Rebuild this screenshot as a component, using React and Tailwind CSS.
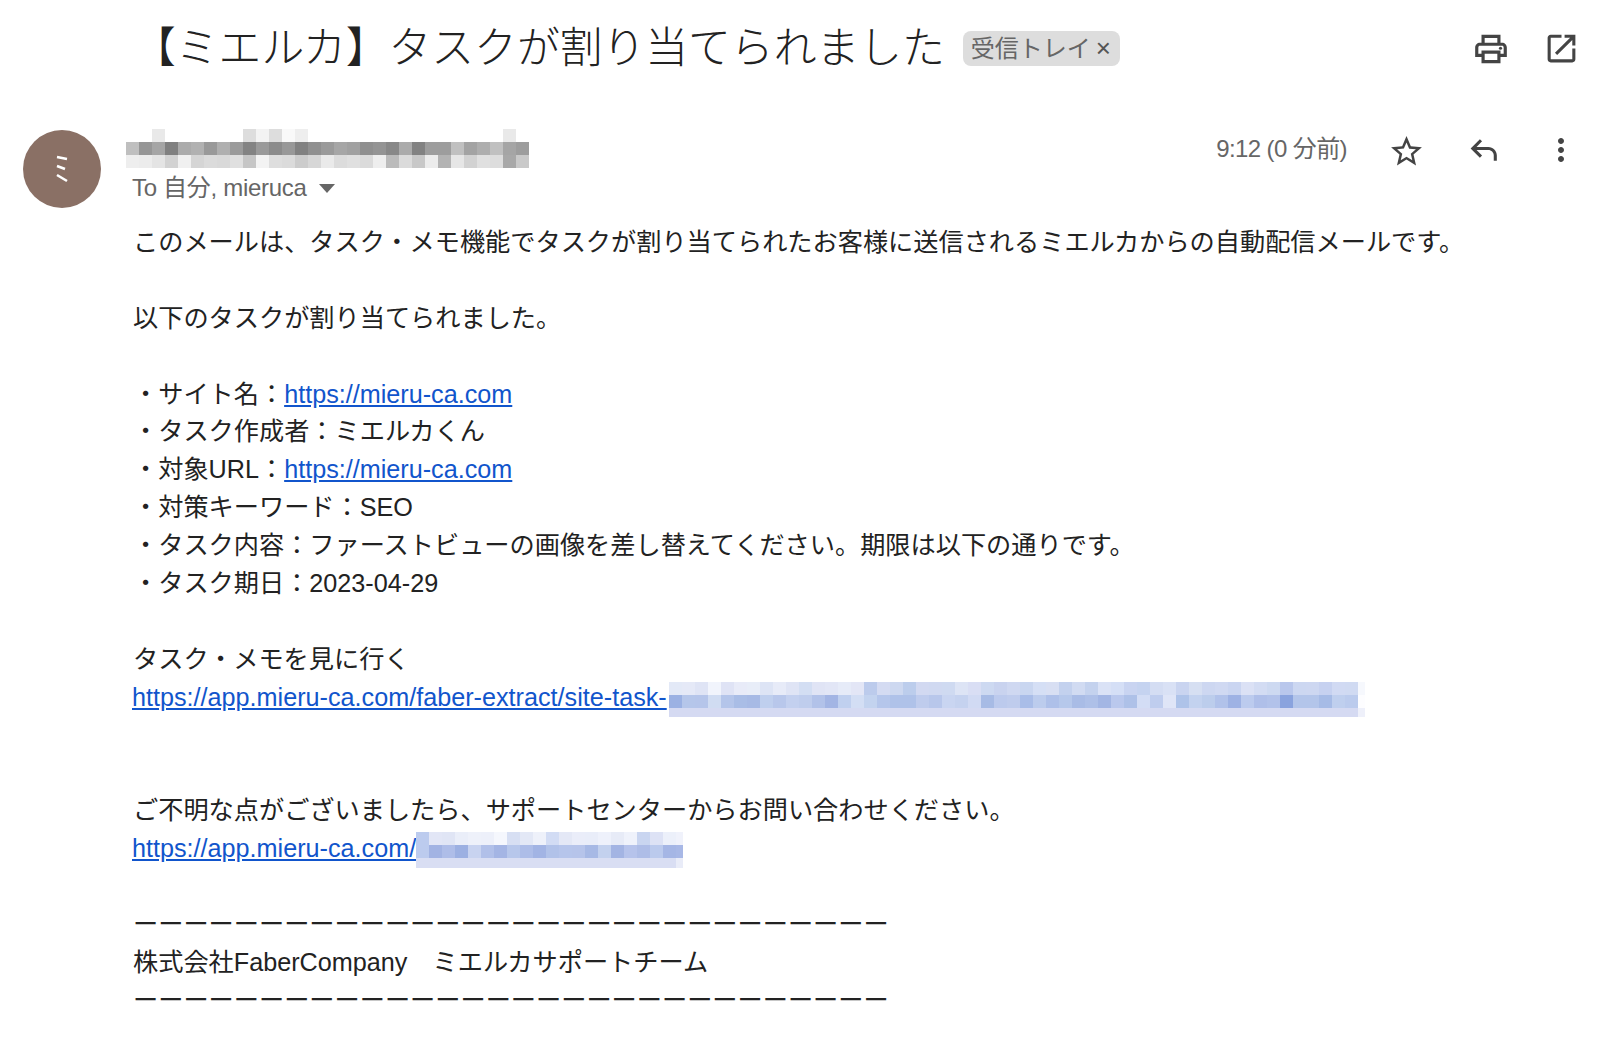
import React from 'react';

const NAME_ROWS = [
  ['fff', 'fff', 'e9e9e9', 'fff', 'fff', 'fff', 'fff', 'fff', 'fff', 'ddd', 'f3f3f3', 'ddd', 'f9f9f9', 'eee', 'fff', 'fff', 'fff', 'fff', 'fff', 'fff', 'fff', 'fff', 'fff', 'fff', 'fff', 'fff', 'fff', 'fff', 'fff', 'e9e9e9', 'fff'],
  ['bfbfbf', '969696', 'a5a5a5', '808080', 'ababab', 'b1b1b1', '999999', 'afafaf', '9b9b9b', '838383', '9a9a9a', '8b8b8b', '989898', '818181', '909090', '9a9a9a', 'a6a6a6', 'a1a1a1', '8f8f8f', '949494', '888888', 'ababab', '828282', '9d9d9d', '9d9d9d', 'c0c0c0', 'a3a3a3', 'aeaeae', 'c0c0c0', 'a5a5a5', '9d9d9d'],
  ['eeeeee', 'ececec', 'e4e4e4', 'd2d2d2', 'f0f0f0', 'd5d5d5', 'dbdbdb', 'd9d9d9', 'e0e0e0', 'c6c6c6', 'f3f3f3', 'dedede', 'dbdbdb', 'cccccc', 'd7d7d7', 'eaeaea', 'dcdcdc', 'e0e0e0', 'dbdbdb', 'eeeeee', 'bbbbbb', 'dbdbdb', 'c8c8c8', 'ececec', 'b3b3b3', 'e6e6e6', 'd2d2d2', 'e0e0e0', 'dddddd', 'a8a8a8', 'c9c9c9'],
];

const TASK_URL_ROWS = [
  ['e3e9f7', 'e5e9f7', 'dfe4f5', 'f1f4fc', 'dfe3f5', 'e8ebf8', 'e8edf8', 'dde4f5', 'e7ebf8', 'dfe4f5', 'd3def3', 'e0e4f5', 'e2e6f6', 'e6ebf8', 'e3e6f6', 'bccbec', 'd4dbf2', 'cdd8f0', 'bccdec', 'd2d9f1', 'd0d9f1', 'cfdaf1', 'dde4f5', 'd9def4', 'cdd9f1', 'c9d3ef', 'cfd8f1', 'c9d6f0', 'd5dff5', 'd8dff3', 'c3d1ee', 'd1dbf2', 'c4d2ee', 'dae2f6', 'd5dff6', 'c9d4f1', 'c5d3f0', 'd4ddf3', 'd9e1f5', 'c9d4f0', 'd6dff2', 'cdd7f1', 'd0d9f2', 'cad5f1', 'dbe1f5', 'd3dcf3', 'cdd9f1', 'b9c7ec', 'ccd7f1', 'cdd7f1', 'c6d1f0', 'd1daf3', 'd0daf2'],
  ['9bb1e3', 'b5c6ea', 'b5c5ea', 'd0dcf2', 'b4c5ea', 'a9bde6', 'a7bae5', 'bfcfee', 'b8c7eb', 'c3d0ef', 'bfcded', 'b2c2e9', 'a3b5e4', 'c0d0ef', 'd3def4', 'c3d3ef', 'b5c6eb', 'afc2e9', 'afc2e9', 'bfcced', 'b8c7eb', 'c9d5f1', 'c5d2ef', 'd1daf3', 'a7bbe5', 'bccaed', 'bfcced', 'a9bde8', 'bccced', 'aec0e9', 'b6c8eb', 'a9bce6', 'aec0e8', 'a3b6e4', 'bac8ed', 'aec1e8', 'd3ddf5', 'bfcdee', 'dfe5f7', 'aec3e9', 'c3d2ef', 'bccdec', 'b1c2ea', '9eb2e4', 'bccbee', 'afbfe9', 'b2c2ea', '8aa3de', 'b3c5ea', 'b3c5ea', 'a6bbe6', 'bfcfee', 'bbcbed'],
];

const SUPPORT_URL_ROWS = [
  ['bccbee', 'e2e6f6', 'e0e5f5', 'eaeef9', 'eef1fa', 'edf0fa', 'f5f7fd', 'd7dff3', 'e3e8f6', 'eef1fa', 'd2dcf4', 'e4e8f6', 'eaedf9', 'e9edf9', 'eef1fb', 'e7ebf7', 'eff2fb', 'c9d5f0', 'dde2f5', 'ecf0fa'],
  ['bccbee', 'a2b3e3', 'aebde8', '9cb0e2', 'c8d3f0', 'b1c0e9', 'a4b5e4', 'b7c7eb', 'adbde8', 'a2b4e4', 'b1c2e9', 'b6c5eb', 'b6c4ea', 'a7b9e5', 'c3d1ee', 'a3b4e3', 'b6c3eb', 'aebde7', 'bbcaed', 'a5b6e5'],
];

const DASHES = 'ー'.repeat(30);

// blurred-out part of the screenshot, one block per sample
const Mosaic = ({ rows, className }) => (
  <div className={className}>
    {rows.map((row, i) => (
      <div key={i} className="flex h-[13px]">
        {row.map((color, j) => (
          <div key={j} className="w-[13px]" style={{ backgroundColor: `#${color}` }} />
        ))}
      </div>
    ))}
  </div>
);

const Icon = ({ d, children, className }) => (
  <svg viewBox="0 0 24 24" fill="#444444" className={className}>
    <path d={d} />
    {children}
  </svg>
);

const Link = ({ children }) => (
  <a className="text-[#1155cc] underline underline-offset-2">{children}</a>
);

const Line = ({ children }) => <div className="h-[37.9px] whitespace-nowrap">{children}</div>;

export default function App() {
  return (
    <div
      className="h-[1052px] overflow-hidden bg-white text-[#222222]"
      style={{ fontFamily: '"Liberation Sans", "Noto Sans CJK JP", sans-serif' }}
    >
      {/* Subject */}
      <header className="flex h-[97px] items-center pl-[133px] pr-[20px]">
        <h1 className="text-[42.8px] font-light leading-none whitespace-nowrap">
          【ミエルカ】タスクが割り当てられました
        </h1>
        <span className="ml-[18px] flex h-[35px] w-[157px] items-center rounded-lg bg-[#dddddd] pl-[8px] text-[24px] text-[#666666]">
          受信トレイ
          <span className="ml-[5px] text-[26px] text-[#555555]">×</span>
        </span>
        <div className="ml-auto flex items-center gap-[33px]">
          <Icon
            className="h-[38px] w-[38px]"
            d="M19 8h-1V3H6v5H5c-1.66 0-3 1.34-3 3v6h4v4h12v-4h4v-6c0-1.66-1.34-3-3-3zM8 5h8v3H8V5zm8 12v2H8v-4h8v2zm2-2v-2H6v2H4v-4c0-.55.45-1 1-1h14c.55 0 1 .45 1 1v4h-2z"
          >
            <circle cx="18" cy="11.5" r="1" />
          </Icon>
          <Icon
            className="h-[37px] w-[37px]"
            d="M19 19H5V5h7V3H5c-1.11 0-2 .9-2 2v14c0 1.1.89 2 2 2h14c1.1 0 2-.9 2-2v-7h-2v7zM14 3v2h3.59l-9.83 9.83 1.41 1.41L19 6.41V10h2V3h-7z"
          />
        </div>
      </header>

      {/* Sender */}
      <div className="mt-[33px] flex pl-[23px] pr-[21px]">
        <div className="flex h-[78px] w-[78px] shrink-0 items-center justify-center rounded-full bg-[#8a7065]">
          <svg viewBox="0 0 14 28" className="h-[28px] w-[14px]" stroke="#ffffff" strokeWidth="2.6" fill="none">
            <path d="M2 2l10 2M2 11l8 3M2 20l10 6" />
          </svg>
        </div>
        <div className="ml-[25px] min-w-0">
          <Mosaic rows={NAME_ROWS} className="-mt-px" />
          <div className="mt-px flex h-[38px] items-center pl-[6px] text-[24px] tracking-[-0.3px] text-[#666666]">
            To 自分, mieruca
            <span className="ml-[12px] h-0 w-0 border-x-[8px] border-t-[9px] border-x-transparent border-t-[#666666]" />
          </div>
        </div>
        <div className="ml-auto flex h-[38px] items-start text-[24px] tracking-[-0.6px] text-[#666666]">
          <span className="mr-[41px] leading-[38px]">9:12 (0 分前)</span>
          <Icon
            className="mt-[3px] h-[37px] w-[37px]"
            d="M22 9.24l-7.19-.62L12 2 9.19 8.63 2 9.24l5.46 4.73L5.82 21 12 17.27 18.18 21l-1.63-7.03L22 9.24zM12 15.4l-3.76 2.27 1-4.28-3.32-2.88 4.38-.38L12 6.1l1.71 4.04 4.38.38-3.32 2.88 1 4.28L12 15.4z"
          />
          <Icon
            className="ml-[41px] mt-[3px] h-[37px] w-[37px]"
            d="M20 18h-2v-3.5c0-1.9-1.6-3.5-3.5-3.5H6.83l3.58 3.59L9 16 3 10l6-6 1.41 1.41L6.83 9h7.67c3 0 5.5 2.5 5.5 5.5z"
          />
          <Icon
            className="ml-[40px] mt-[2px] h-[36px] w-[36px]"
            d="M12 8c1.1 0 2-.9 2-2s-.9-2-2-2-2 .9-2 2 .9 2 2 2zm0 2c-1.1 0-2 .9-2 2s.9 2 2 2 2-.9 2-2-.9-2-2-2zm0 6c-1.1 0-2 .9-2 2s.9 2 2 2 2-.9 2-2-.9-2-2-2z"
          />
        </div>
      </div>

      {/* Body */}
      <div className="mt-[15px] pl-[133px] text-[25.2px] leading-[38px]">
        <Line>このメールは、タスク・メモ機能でタスクが割り当てられたお客様に送信されるミエルカからの自動配信メールです。</Line>
        <Line />
        <Line>以下のタスクが割り当てられました。</Line>
        <Line />
        <Line>・サイト名：<Link>https://mieru-ca.com</Link></Line>
        <Line>・タスク作成者：ミエルカくん</Line>
        <Line>・対象URL：<Link>https://mieru-ca.com</Link></Line>
        <Line>・対策キーワード：SEO</Line>
        <Line>・タスク内容：ファーストビューの画像を差し替えてください。期限は以下の通りです。</Line>
        <Line>・タスク期日：2023-04-29</Line>
        <Line />
        <Line>タスク・メモを見に行く</Line>
        <div className="-ml-px flex h-[37.9px] items-start whitespace-nowrap">
          <Link>https://app.mieru-ca.com/faber-extract/site-task-</Link>
          <div className="ml-[2px] mt-[4px] flex">
            <div>
              <Mosaic rows={TASK_URL_ROWS} />
              <div className="h-[9px] w-[689px] bg-[#d5daf2]" />
            </div>
            <div className="w-[7px]">
              <div className="h-[13px] bg-[#f6f8fd]" />
              <div className="h-[13px] bg-[#fdfdff]" />
              <div className="h-[9px] bg-[#eef0fa]" />
            </div>
          </div>
        </div>
        <Line />
        <Line />
        <Line>ご不明な点がございましたら、サポートセンターからお問い合わせください。</Line>
        <div className="-ml-px flex h-[37.9px] items-start whitespace-nowrap">
          <Link>https://app.mieru-ca.com/</Link>
          <div className="mt-[3px] flex">
            <div>
              <Mosaic rows={SUPPORT_URL_ROWS} />
              <div className="h-[10px] w-[260px] bg-[#d9def3]" />
            </div>
            <div className="w-[7px]">
              <div className="h-[13px] bg-[#f0f2fb]" />
              <div className="h-[13px] bg-[#a8b8e6]" />
              <div className="h-[10px] bg-[#e9ecf8]" />
            </div>
          </div>
        </div>
        <Line />
        <Line>{DASHES}</Line>
        <Line>株式会社FaberCompany　ミエルカサポートチーム</Line>
        <Line>{DASHES}</Line>
      </div>
    </div>
  );
}
